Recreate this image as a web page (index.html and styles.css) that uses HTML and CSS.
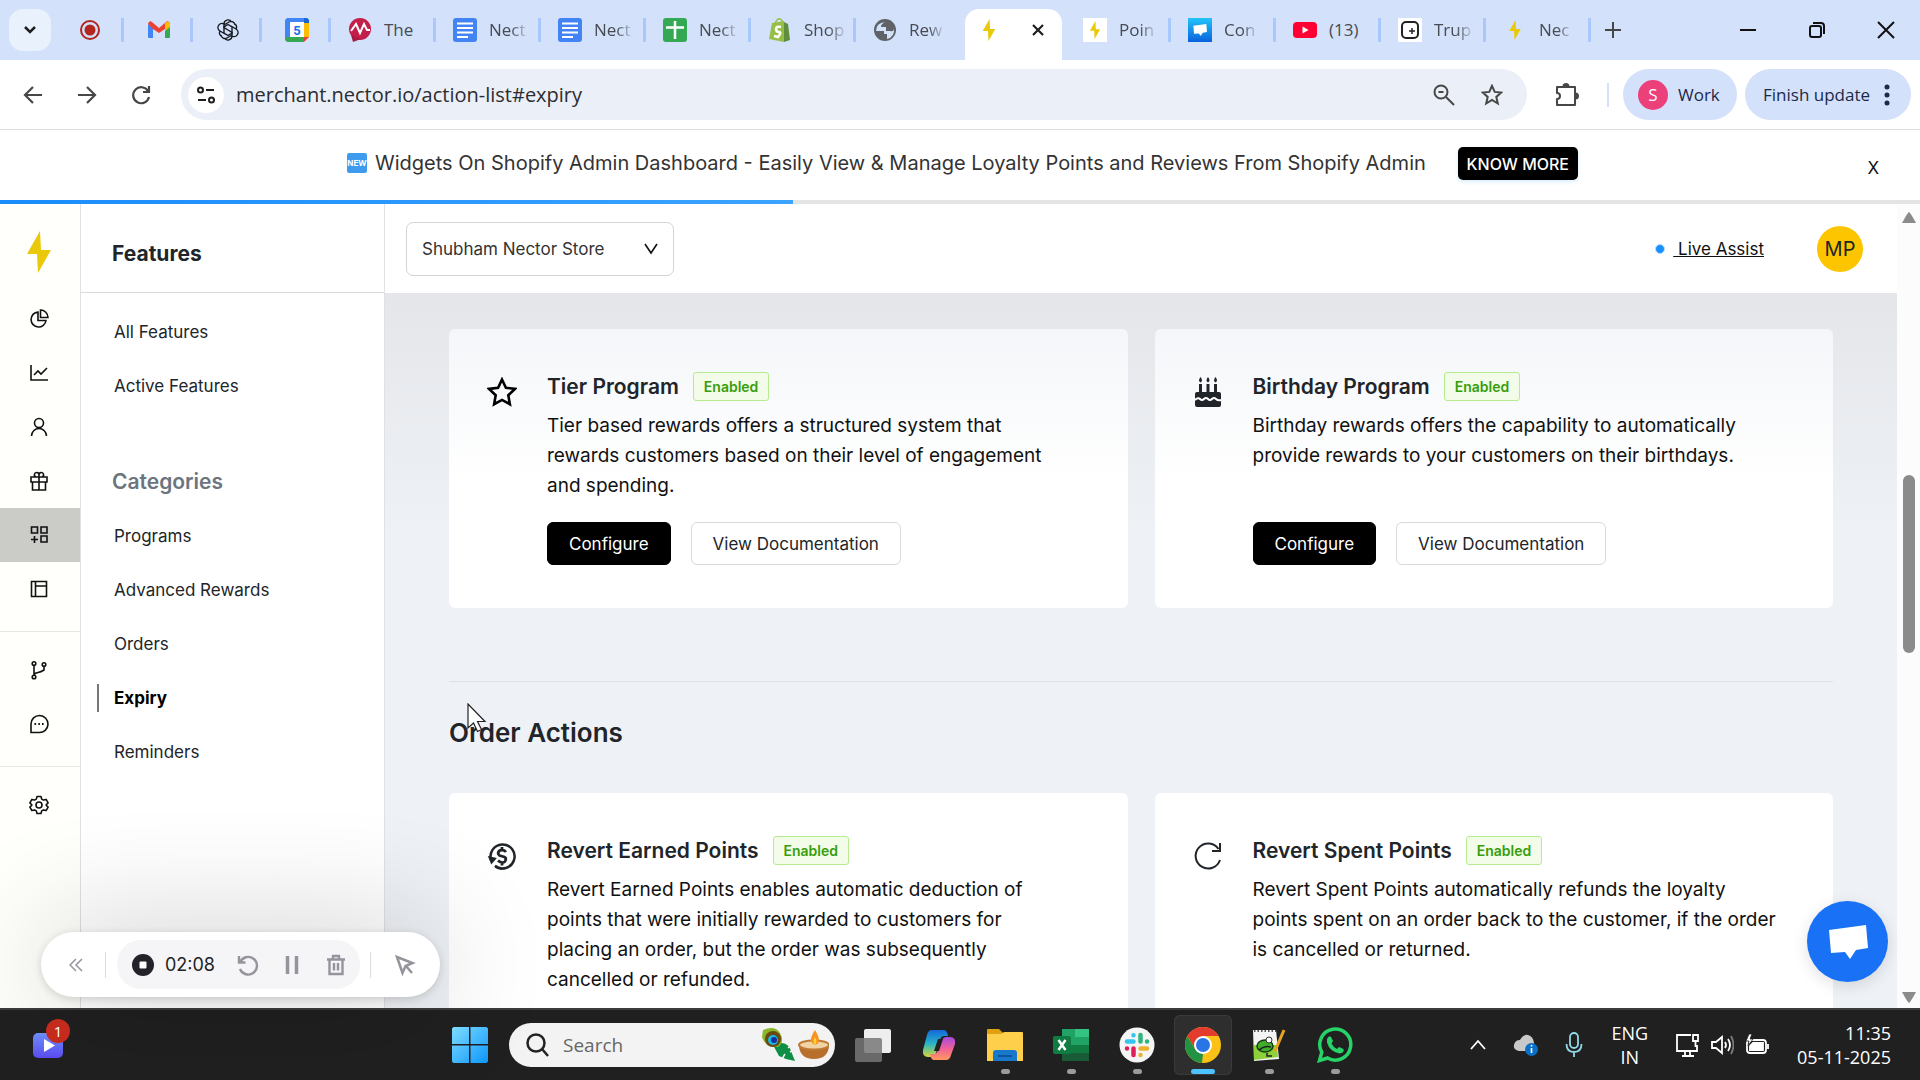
FILE: index.html
```html
<!DOCTYPE html>
<html lang="en">
<head>
<meta charset="utf-8">
<title>Nector</title>
<link rel="stylesheet" href="styles.css">
</head>
<body>
<svg class="defs" aria-hidden="true">
  <symbol id="bolt" viewBox="0 0 24 42"><path fill="#e9c90a" d="M13 0 0 23h10l1 19 13-23H14z"/></symbol>
  <symbol id="doc" viewBox="0 0 24 24"><rect width="24" height="24" rx="3" fill="#4284f4"/><path stroke="#fff" stroke-width="2" d="M4 5.500h16M4 10h16M4 14.500h16M4 19h11"/></symbol>
  <symbol id="chat" viewBox="0 0 40 34"><path fill="#fff" d="m1 5 37-5 2 23-12 2-6 9-5-7-14 1z"/></symbol>
  <linearGradient id="sky" x2="0" y2="1"><stop stop-color="#20c4fa"/><stop offset="1" stop-color="#0a62dc"/></linearGradient>
  <linearGradient id="win" x2="1" y2="1"><stop stop-color="#7fdcff"/><stop offset="1" stop-color="#0c96fa"/></linearGradient>
  <linearGradient id="violet" x2="0" y2="1"><stop stop-color="#6d8ef8"/><stop offset="1" stop-color="#5a4af0"/></linearGradient>
  <linearGradient id="copA" x2="0" y2="1"><stop stop-color="#1668d8"/><stop offset=".5" stop-color="#27b3c8"/><stop offset="1" stop-color="#d6d834"/></linearGradient>
  <linearGradient id="copB" x2="0" y2="1"><stop stop-color="#a64be0"/><stop offset=".5" stop-color="#f0609a"/><stop offset="1" stop-color="#ff9a5c"/></linearGradient>
</svg>

<header class="tabstrip">
  <button class="tab-search" aria-label="Search tabs"><svg width="14" height="10" viewBox="0 0 14 10"><path d="m2 2 5 5 5-5"/></svg></button>
  <div class="tabs" role="tablist">
    <button class="tab mini" role="tab" aria-label="Recorder"><svg width="22" height="22" viewBox="0 0 22 22"><circle cx="11" cy="11" r="9" fill="none" stroke="#b3261e" stroke-width="2"/><circle cx="11" cy="11" r="5.500" fill="#b3261e"/></svg></button>
    <button class="tab mini" role="tab" aria-label="Gmail"><svg width="22" height="18" viewBox="0 0 22 18"><path fill="#4285f4" d="M0 3v13q0 1 1 1h4V7z"/><path fill="#34a853" d="M22 3v13q0 1-1 1h-4V7z"/><path fill="#ea4335" d="M0 3q1-4 4-2l7 6 7-6q3-2 4 2l-5 5-6 4-6-4z"/><path fill="#fbbc04" d="M17 2q4-3 5 1v3l-5 4z"/></svg></button>
    <button class="tab mini" role="tab" aria-label="ChatGPT"><svg width="22" height="22" viewBox="0 0 22 22" fill="none" stroke="#16181d" stroke-width="1.400"><path d="M11 11 7 8.500V5a4 4 0 0 1 7.500-2M7 6l5-3a4 4 0 0 1 6 3"/><path d="M11 11l4 2.500V17a4 4 0 0 1-7.500 2M15 16l-5 3a4 4 0 0 1-6-3"/><path d="M7 5a4 4 0 0 0-4 7l5 3M3 12a4 4 0 0 0 1 5M15 17a4 4 0 0 0 4-7l-5-3M19 10a4 4 0 0 0-1-5M7 8v6l4 2.500 4-2.500V8l-4-2.500z"/></svg></button>
    <button class="tab mini" role="tab" aria-label="Calendar, 5"><svg width="24" height="24" viewBox="0 0 24 24"><path fill="#4285f4" d="M2 0h20l2 2v4H0V2z"/><path fill="#4285f4" d="M0 2h5v17H0z"/><path fill="#fbbc04" d="M19 5h5v14h-5z"/><path fill="#34a853" d="M0 19h19v5H2l-2-2z"/><path fill="#ea4335" d="M19 19h5l-5 5z"/><path fill="#1967d2" d="M19 0h3l2 2v3h-5z"/><path fill="#fff" d="M5 4h14v15H5z"/><text x="12" y="16.500" text-anchor="middle" class="cal">5</text></svg></button>
    <button class="tab" role="tab"><svg width="24" height="24" viewBox="0 0 24 24"><circle cx="12" cy="11" r="11" fill="#c41e4a"/><path fill="#a81c44" d="m3 17 2 7 8-3z"/><path fill="none" stroke="#fff" stroke-width="2" d="m3 13 5-7 4 9 4-9 3 6 3 0"/></svg><span class="whole">The</span></button>
    <button class="tab" role="tab"><svg width="24" height="24"><use href="#doc"/></svg><span>Nect</span></button>
    <button class="tab" role="tab"><svg width="24" height="24"><use href="#doc"/></svg><span>Nect</span></button>
    <button class="tab" role="tab"><svg width="24" height="24" viewBox="0 0 24 24"><rect width="24" height="24" rx="3" fill="#34a853"/><path stroke="#fff" stroke-width="2.500" d="M3 9.500h18M12 3v18"/></svg><span>Nect</span></button>
    <button class="tab" role="tab"><svg width="24" height="24" viewBox="0 0 24 24"><path fill="#95bf47" d="m4 5 12-2v21L1 21z"/><path fill="#5e8e3e" d="m16 4 4 2 2 16-6 2z"/><path fill="none" stroke="#95bf47" stroke-width="1.500" d="M7 6q2-6 5-5t2 4"/><path fill="none" stroke="#fff" stroke-width="2.500" d="M13 9q-5-1-5 2t3 3-1 5l-4-1"/></svg><span>Shop</span></button>
    <button class="tab" role="tab"><svg width="24" height="24" viewBox="0 0 24 24"><circle cx="12" cy="12" r="11" fill="#5f6368"/><path fill="#d3e1fb" d="M12 4q-4 2-4 5h5v4h4q4 1 4-3 1 9-7 11v-5h-3v-3H3q0-8 9-9z"/></svg><span>Rew</span></button>
    <button class="tab active" role="tab" aria-selected="true" aria-label="Nector"><svg width="24" height="22"><use href="#bolt"/></svg><svg class="tab-close" width="16" height="16" viewBox="0 0 16 16"><path d="m3 3 10 10M13 3 3 13"/></svg></button>
    <button class="tab" role="tab"><svg width="24" height="24" viewBox="0 0 24 24"><path fill="#fff" d="M0 0h24v24H0z"/><use href="#bolt" x="4" y="3" width="16" height="18"/></svg><span>Poin</span></button>
    <button class="tab" role="tab"><svg width="24" height="24" viewBox="0 0 24 24"><path fill="url(#sky)" d="M0 0h24v24H0z"/><use href="#chat" x="5" y="6" width="14" height="12"/></svg><span>Con</span></button>
    <button class="tab" role="tab"><svg width="24" height="24" viewBox="0 0 24 24"><rect y="4" width="24" height="16" rx="4" fill="#ff0033"/><path fill="#fff" d="m9.500 8.500 6 3.500-6 3.500z"/></svg><span class="whole">(13)</span></button>
    <button class="tab" role="tab"><svg width="24" height="24" viewBox="0 0 24 24"><path fill="#fff" d="M0 0h24v24H0z"/><rect x="4" y="4" width="16" height="16" rx="4" fill="none" stroke="#222" stroke-width="2"/><path stroke="#222" stroke-width="1.500" d="M14 10v6M11 13h6"/></svg><span>Trup</span></button>
    <button class="tab" role="tab"><svg width="24" height="20"><use href="#bolt"/></svg><span>Nec</span></button>
  </div>
  <button class="icon-btn new-tab" aria-label="New tab"><svg width="18" height="18" viewBox="0 0 18 18"><path d="M9 1v16M1 9h16"/></svg></button>
  <div class="window-controls">
    <button aria-label="Minimize"><svg width="18" height="18" viewBox="0 0 18 18"><path d="M1 9h16"/></svg></button>
    <button aria-label="Restore"><svg width="18" height="18" viewBox="0 0 18 18"><rect x="2" y="5" width="11" height="11" rx="2"/><path d="M5 2h8q3 0 3 3v8"/></svg></button>
    <button aria-label="Close window"><svg width="18" height="18" viewBox="0 0 18 18"><path d="m1 1 16 16M17 1 1 17"/></svg></button>
  </div>
</header>

<div class="toolbar">
  <button class="nav-btn" aria-label="Back"><svg width="20" height="20" viewBox="0 0 20 20"><path d="M19 10H2M10 2l-8 8 8 8"/></svg></button>
  <button class="nav-btn" aria-label="Forward"><svg width="20" height="20" viewBox="0 0 20 20"><path d="M1 10h17M10 2l8 8-8 8"/></svg></button>
  <button class="nav-btn" aria-label="Reload"><svg width="20" height="20" viewBox="0 0 20 20"><path d="M17 6a8 8 0 1 0 1 6M18 1v6h-6"/></svg></button>
  <div class="omnibox">
    <button class="site-info" aria-label="Site information"><svg width="20" height="20" viewBox="0 0 20 20"><circle cx="4.500" cy="5" r="2.500"/><path d="M10 5h8M2 15h8"/><circle cx="15.500" cy="15" r="2.500"/></svg></button>
    <input type="text" aria-label="Address" value="merchant.nector.io/action-list#expiry">
    <button class="icon-btn" aria-label="Zoom"><svg width="22" height="22" viewBox="0 0 22 22"><circle cx="8" cy="8" r="6.500"/><path d="M5.500 8h5M13 13l8 8"/></svg></button>
    <button class="icon-btn" aria-label="Bookmark"><svg width="22" height="22" viewBox="0 0 22 22"><path d="m11 1.800 2.700 6.100 6.600.6-5 4.400 1.500 6.600L11 16l-5.800 3.500 1.500-6.600-5-4.400 6.600-.6z"/></svg></button>
  </div>
  <button class="icon-btn ext" aria-label="Extensions"><svg width="26" height="26" viewBox="0 0 26 26"><path d="M3 5h18v18H3v-6q3 0 3-3t-3-3z" stroke-linejoin="round"/><path d="M9.500 4.500a2.500 2.500 0 0 1 5 0zM21.500 11.500a2.500 2.500 0 0 1 0 5z" fill="#474747"/></svg></button>
  <span class="bar-sep"></span>
  <button class="pill profile"><span class="dot-s">S</span>Work</button>
  <button class="pill update">Finish update<svg width="6" height="22" viewBox="0 0 6 22"><circle cx="3" cy="3" r="2.500"/><circle cx="3" cy="11" r="2.500"/><circle cx="3" cy="19" r="2.500"/></svg></button>
</div>

<section class="banner">
  <p><svg width="20" height="20" viewBox="0 0 20 20"><rect width="20" height="20" rx="2" fill="#3f9bee"/><text x="10" y="13" text-anchor="middle" class="new">NEW</text></svg>Widgets On Shopify Admin Dashboard - Easily View &amp; Manage Loyalty Points and Reviews From Shopify Admin</p>
  <button class="know">KNOW MORE</button>
  <button class="banner-close" aria-label="Dismiss">X</button>
</section>
<div class="progress"><span style="width:41.300%"></span></div>

<div class="app">
  <nav class="rail" aria-label="Sections">
    <a class="logo" href="#home" aria-label="Nector"><svg width="24" height="42"><use href="#bolt"/></svg></a>
    <a href="#overview" aria-label="Overview"><svg viewBox="0 0 20 20"><path d="M9 3a7.500 7.500 0 1 0 8 8.500H9z"/><path d="M11.500 1v7.500H19A7.500 7.500 0 0 0 11.500 1z"/></svg></a>
    <a href="#analytics" aria-label="Analytics"><svg viewBox="0 0 20 20"><path d="M2 2v15h17M5 12l4-4 3 3 6-6"/></svg></a>
    <a href="#customers" aria-label="Customers"><svg viewBox="0 0 20 20"><circle cx="10" cy="6" r="4.500"/><path d="M2.500 19a7.500 7.500 0 0 1 15 0"/></svg></a>
    <a href="#rewards" aria-label="Rewards"><svg viewBox="0 0 20 20"><path d="M2 6h16v5H2zM3.500 11v8h13v-8M10 6v13M10 6H7a2.300 2.300 0 1 1 3-2.300zM10 6h3a2.300 2.300 0 1 0-3-2.300z"/></svg></a>
    <a class="current" href="#features" aria-label="Features"><svg viewBox="0 0 20 20"><path d="M2.500 2h6v6h-6zM12 2h6v6h-6zM12 11h6v6h-6zM5.500 11v7M2 14.500h7"/></svg></a>
    <a href="#layout" aria-label="Layout"><svg class="thin" viewBox="0 0 20 20"><path d="M2.500 2.500h15v15h-15zM6.500 2.500v15M6.500 7h11"/></svg></a>
    <hr>
    <a href="#workflows" aria-label="Workflows"><svg viewBox="0 0 20 20"><circle cx="5" cy="3.500" r="1.800"/><circle cx="15" cy="4.500" r="1.800"/><circle cx="5" cy="17" r="1.800"/><path d="M5 5.500V15M15 6.500V10q-3 2-6 2.500t-4 2"/></svg></a>
    <a href="#messages" aria-label="Messages"><svg viewBox="0 0 20 20"><path d="M2 18.500V10a8.500 8.500 0 1 1 8 8.500z"/><path d="M5.500 10h1.600M9.300 10h1.600M13 10h1.600" stroke-width="2"/></svg></a>
    <hr>
    <a href="#settings" aria-label="Settings"><svg viewBox="0 0 20 20"><path stroke-linejoin="round" d="M8 1.500h4l.7 2.600 1.800 1 2.600-.7 2 3.500-1.900 1.900v.4l1.900 1.900-2 3.500-2.600-.7-1.800 1-.7 2.600H8l-.7-2.600-1.800-1-2.600.7-2-3.500 1.900-1.900v-.4L.9 7.900l2-3.500 2.600.7 1.800-1z"/><circle cx="10" cy="10" r="3"/></svg></a>
  </nav>

  <aside class="sidebar">
    <h2 class="side-head">Features</h2>
    <nav aria-label="Features">
      <a href="#all">All Features</a>
      <a href="#active">Active Features</a>
      <h3>Categories</h3>
      <a href="#programs">Programs</a>
      <a href="#advanced">Advanced Rewards</a>
      <a href="#orders">Orders</a>
      <a class="current" href="#expiry">Expiry</a>
      <a href="#reminders">Reminders</a>
    </nav>
  </aside>

  <main>
    <header class="main-head">
      <label class="store"><select aria-label="Store"><option>Shubham Nector Store</option></select><svg width="14" height="12" viewBox="0 0 14 12"><path d="m1 1 6 9 6-9"/></svg></label>
      <a class="assist" href="#assist"><i></i><span>&nbsp;Live Assist</span></a>
      <button class="avatar">MP</button>
    </header>
    <div class="content">
      <div class="cards shaded">
        <article class="card">
          <svg class="card-icon" viewBox="0 0 30 30"><path d="m15 2.500 3.900 8.200 9 1.200-6.600 6.300 1.600 9L15 22.900l-7.900 4.300 1.600-9-6.600-6.300 9-1.200z" fill="none" stroke="#000" stroke-width="2.600"/></svg>
          <div class="card-body">
            <h3>Tier Program <span class="badge">Enabled</span></h3>
            <p>Tier based rewards offers a structured system that rewards customers based on their level of engagement and spending.</p>
            <div class="actions"><button class="primary">Configure</button><button>View Documentation</button></div>
          </div>
        </article>
        <article class="card">
          <svg class="card-icon" viewBox="0 0 30 30" fill="#212529"><path d="M6 7h3v9H6zM13.500 7h3v9h-3zM21 7h3v9h-3zM7.500 0q3 4 0 5.500-3-1.500 0-5.500zM15 0q3 4 0 5.500-3-1.500 0-5.500zM22.500 0q3 4 0 5.500-3-1.500 0-5.500z"/><path d="M4 15h22q2 0 2 2v11q0 2-2 2H4q-2 0-2-2V17q0-2 2-2z"/><path d="M2 23q3-3 5-1t4 0 4 0 4 0 4 0 5 1" fill="none" stroke="#fff" stroke-width="2"/></svg>
          <div class="card-body">
            <h3>Birthday Program <span class="badge">Enabled</span></h3>
            <p>Birthday rewards offers the capability to automatically provide rewards to your customers on their birthdays.</p>
            <div class="actions"><button class="primary">Configure</button><button>View Documentation</button></div>
          </div>
        </article>
      </div>
      <hr>
      <h2>Order Actions</h2>
      <div class="cards">
        <article class="card">
          <svg class="card-icon" viewBox="0 0 30 30" fill="none" stroke="#212529" stroke-width="2.500"><path d="M4.500 20A12 12 0 1 1 8 24.700"/><path d="m2 16 2.500 6 4-4.500zM8 26q4 3 8 1.500" fill="#212529" stroke-width="1.500"/><path d="M19 11q-1.500-2-4-2t-3.500 2 1 3.500l5 1.500q2 1 1 3.500t-3.500 2-4-2M15 6v3M15 21.500v3" stroke-width="2.800"/></svg>
          <div class="card-body">
            <h3>Revert Earned Points <span class="badge">Enabled</span></h3>
            <p>Revert Earned Points enables automatic deduction of points that were initially rewarded to customers for placing&nbsp;an order, but the order was subsequently cancelled or refunded.</p>
          </div>
        </article>
        <article class="card">
          <svg class="card-icon" viewBox="0 0 30 30" fill="none" stroke="#212529" stroke-width="2"><path d="M27 19A12.500 12.500 0 1 1 25.500 8"/><path d="M27 2v8h-8"/></svg>
          <div class="card-body">
            <h3>Revert Spent Points <span class="badge">Enabled</span></h3>
            <p>Revert Spent Points automatically refunds the loyalty points spent on an order back to the customer, if the order is cancelled or returned.</p>
          </div>
        </article>
      </div>
    </div>
  </main>

  <div class="scrollbar" aria-hidden="true">
    <svg width="16" height="12" viewBox="0 0 16 12"><path d="M8 1q1 0 7 11H1Q7 1 8 1z"/></svg>
    <span class="track"><span class="thumb"></span></span>
    <svg width="16" height="12" viewBox="0 0 16 12"><path d="M8 11Q7 11 1 0h14Q9 11 8 11z"/></svg>
  </div>

  <button class="chat" aria-label="Open chat"><svg width="40" height="34"><use href="#chat"/></svg></button>

  <svg class="pointer" width="20" height="30" viewBox="0 0 20 30"><path d="M1 1v24l5.500-5 4 8.500 4-2-4-8H18z" fill="#fff" stroke="#222" stroke-width="1.200"/></svg>

  <div class="recorder">
    <button aria-label="Collapse"><svg width="14" height="14" viewBox="0 0 14 14"><path d="M7 1 1 7l6 6M13 1 7 7l6 6" stroke-width="1.500"/></svg></button>
    <span class="rec-sep"></span>
    <div class="rec-group">
      <button aria-label="Stop"><svg width="22" height="22" viewBox="0 0 22 22"><circle cx="11" cy="11" r="11" fill="#222228" stroke="none"/><rect x="7.500" y="7.500" width="7" height="7" rx="1" fill="#fff" stroke="none"/></svg></button>
      <time>02:08</time>
      <button aria-label="Restart"><svg width="22" height="22" viewBox="0 0 22 22"><path d="M3 8.500A8.800 8.800 0 1 1 3 15M2 2v6.500h6.500"/></svg></button>
      <button aria-label="Pause"><svg width="22" height="22" viewBox="0 0 22 22"><path d="M6.500 2v18M15.500 2v18" stroke-width="3.500"/></svg></button>
      <button aria-label="Delete"><svg width="22" height="22" viewBox="0 0 22 22"><path d="M2 5.500h18M8 5V2h6v3M4.500 6v14h13V6M9 9v7.500M13 9v7.500"/></svg></button>
    </div>
    <span class="rec-sep"></span>
    <button aria-label="Pointer"><svg width="22" height="22" viewBox="0 0 22 22"><path d="m3 3 5.500 16 3-7 7-3zM12 12l6 7" stroke-width="2.500"/></svg></button>
  </div>
</div>

<footer class="taskbar">
  <button class="widget" aria-label="Widgets"><svg width="30" height="25" viewBox="0 0 30 25"><rect width="30" height="25" rx="5" fill="url(#violet)"/><path fill="#fff" d="m11 6 11 6.500L11 19z"/></svg><span>1</span></button>
  <div class="apps">
    <button aria-label="Start"><svg width="36" height="36" viewBox="0 0 36 36" fill="url(#win)"><path d="M1.500 0H17v17H0V1.500zM18.500 0H34.500L36 1.500V17H18.500zM0 18.500h17V36H1.500L0 34.500zM18.500 18.500H36v16L34.500 36h-16z"/></svg></button>
    <label class="search">
      <svg width="24" height="24" viewBox="0 0 24 24"><circle cx="11" cy="10" r="8.500"/><path d="m17 16 6 7"/></svg>
      <input type="search" placeholder="Search">
      <svg width="68" height="36" viewBox="0 0 68 36"><path fill="#0d8f45" d="M12 18q14-6 18 6l4 10-9-2-7-3z"/><path fill="#8ab62b" d="M2 3q12-5 17 3 5 9-2 14Q4 21 1 10z"/><ellipse cx="12" cy="12" rx="8" ry="8" fill="#6b4a12"/><circle cx="12" cy="13" r="5" fill="#19b6e6"/><circle cx="13" cy="13" r="3" fill="#1a2f9c"/><path stroke="#f0f0f0" stroke-width="1.500" d="m21 32 3-5M34 22l-5 3M32 17l-5 4"/><path fill="#b96f2c" d="M38 17h30q0 15-15 15T38 17z"/><ellipse cx="53" cy="18" rx="15" ry="4.500" fill="#f1d4a6" stroke="#c07a34" stroke-width="2"/><path fill="#f7931e" d="M54 3q8 13 0 15-8-3 0-15z"/><path fill="#ffd23e" d="M54 10q3 6 0 8-3-2 0-8z"/></svg>
    </label>
    <button aria-label="Task view"><svg width="36" height="36" viewBox="0 0 36 36"><rect x="9" y="2" width="27" height="24" rx="2" fill="#eee"/><rect y="11" width="27" height="24" rx="2" fill="#777" opacity=".85"/></svg></button>
    <button aria-label="Copilot"><svg width="36" height="36" viewBox="0 0 36 36"><path fill="url(#copA)" d="M11 3h12q3 0 4 6h-4q-3 0-4 4l-4 13q-1 4-5 4H7q-6 0-5-7L6 8q1-5 5-5z"/><path fill="url(#copB)" d="M25 33H13q-3 0-4-6h4q3 0 4-4l4-10q1-3 5-3h3q6 0 5 7l-4 11q-1 5-5 5z"/><path fill="#202020" d="M17 12h5l-4 12h-5z"/></svg></button>
    <button class="open" aria-label="File Explorer"><svg width="36" height="36" viewBox="0 0 36 36"><path fill="#e0a010" d="M0 3q0-1 1-1h11l4 4v5H0z"/><path fill="#fdcf4b" d="M0 7h14l3-2h18q1 0 1 1v28H0z"/><path fill="#1778cc" d="M6 34V26q0-3 3-3h18q3 0 3 3v8z"/><path stroke="#0a4a8a" stroke-width="1.500" d="M11 29h14"/></svg></button>
    <button class="open" aria-label="Excel"><svg width="36" height="36" viewBox="0 0 36 36"><path fill="#21a366" d="M9 2h27v32H9z"/><path fill="#33c481" d="M22 2h14v8H22z"/><path fill="#107c41" d="M9 18h27v8H9z"/><path fill="#185c37" d="M9 26h27v8H9z"/><rect y="9" width="18" height="18" rx="2" fill="#107c41"/><path stroke="#fff" stroke-width="2.500" d="m5.500 13 7 10M12.500 13l-7 10"/></svg></button>
    <button class="open" aria-label="Slack"><svg width="36" height="36" viewBox="0 0 36 36" stroke-width="4.500" stroke-linecap="round"><circle cx="18" cy="18" r="17.500" fill="#f5f5f5"/><path stroke="#36c5f0" d="M8 14.500h6.500M14.500 8.300v0"/><path stroke="#2eb67d" d="M21.500 8v6.500M28 14.500v0"/><path stroke="#ecb22e" d="M21.500 21.500H28M21.500 28v0"/><path stroke="#e01e5a" d="M14.500 21.500V28M8 21.500v0"/></svg></button>
    <button class="open focus" aria-label="Chrome"><svg width="36" height="36" viewBox="0 0 36 36"><circle cx="18" cy="18" r="18" fill="#fbc116"/><path fill="#e33b2e" d="M2.400 9A18 18 0 0 1 33.600 9H18L10.200 22.500z"/><path fill="#229342" d="M2.400 9 10.200 22.500 18 27l-1 9A18 18 0 0 1 2.400 9z"/><circle cx="18" cy="18" r="9" fill="#fff"/><circle cx="18" cy="18" r="7" fill="#2a75e6"/></svg></button>
    <button class="open" aria-label="Notepad++"><svg width="36" height="36" viewBox="0 0 36 36"><path fill="#f4f4f4" d="M2 3h23l3 29-25 2z"/><path fill="#8ed03a" d="M3 18h23l1 12-24 3z"/><path stroke="#555" stroke-width="2" stroke-dasharray="1.500 2" d="M3 4h22"/><ellipse cx="14" cy="19" rx="8" ry="6" fill="#3fae2a" stroke="#153d12" stroke-width="1.500"/><circle cx="18" cy="13" r="3" fill="#fff" stroke="#333"/><path stroke="#222" stroke-width="1.500" fill="none" d="M8 23q6-5 12-3M16 26v3h5"/><path stroke="#e9a321" stroke-width="3" d="m24 24 9-21"/></svg></button>
    <button class="open" aria-label="WhatsApp"><svg width="36" height="36" viewBox="0 0 36 36"><path fill="none" stroke="#25d366" stroke-width="3.500" d="m2.500 33.500 2.300-8.300a15.500 15.500 0 1 1 5.800 5.800z"/><path fill="#25d366" d="M10 12q2-4 4-2l2 4-1.500 2.500q2 4 5.500 5.500l2-2 4.500 2q1 4-4 4.500-10-2-12.500-11z"/></svg></button>
  </div>
  <div class="tray">
    <button aria-label="Hidden icons"><svg width="18" height="12" viewBox="0 0 18 12"><path d="m2 10 7-8 7 8"/></svg></button>
    <button aria-label="OneDrive"><svg width="26" height="24" viewBox="0 0 26 24"><path fill="#c9c9c9" stroke="none" d="M6 18q-6-1-5-6t6-5q3-6 8-5t6 8l-2 8z"/><circle cx="18.500" cy="16.500" r="6.500" fill="#0a6fc9" stroke="none"/><path d="M18.500 15v5M18.500 12v1.500" stroke-width="1.600"/></svg></button>
    <button aria-label="Microphone"><svg width="18" height="26" viewBox="0 0 18 26" class="mic"><rect x="5" y="1" width="8" height="15" rx="4"/><path d="M1.500 12q0 8 7.500 8t7.500-8M9 20v5"/></svg></button>
    <button class="lang">ENG<br>IN</button>
    <button aria-label="Network"><svg width="26" height="26" viewBox="0 0 26 26"><path d="M17 3H3v16h20v-6M8 24h12M11 19v5M16 19v5M19 3h5v6h-5zM21.500 9v6"/></svg></button>
    <button aria-label="Volume"><svg width="24" height="22" viewBox="0 0 24 22"><path d="M2 8v6h4l6 5V3L6 8zM15 8q2 3 0 6M18 5q4 6 0 12"/><path opacity=".4" d="M21 2q5 9 0 18"/></svg></button>
    <button aria-label="Battery"><svg width="26" height="22" viewBox="0 0 26 22"><rect x="3" y="6" width="19" height="13" rx="3"/><path fill="#fff" d="M9 9h10v7H6v-4zM24 10v5"/><path fill="#fff" d="M5 0 2 7h3l-1 5 5-7H6l2-5z" stroke="#202020" stroke-width=".8"/></svg></button>
    <button class="clock">11:35<br>05-11-2025</button>
  </div>
</footer>
</body>
</html>
```
FILE: styles.css
```css
* { box-sizing: border-box; }

body {
  margin: 0;
  height: 100vh;
  display: flex;
  flex-direction: column;
  overflow: hidden;
  background: #fff;
  color: #212529;
  font: 17px/24px Inter, "Noto Sans", sans-serif;
}

h2, h3, p { margin: 0; }
a { color: inherit; text-decoration: none; }
button { padding: 0; border: 0; background: none; color: inherit; font: inherit; }
svg { flex: none; }
.defs { position: absolute; width: 0; height: 0; }

.tabstrip, .toolbar, .taskbar { font-family: "Open Sans", "Noto Sans", sans-serif; }

/* Tab strip */
.tabstrip {
  flex: none;
  display: flex;
  align-items: center;
  height: 60px;
  padding-left: 9px;
  background: #d3e1fb;
}
.tab-search {
  display: grid;
  place-items: center;
  width: 42px;
  height: 42px;
  margin-right: 4px;
  border-radius: 14px;
  background: #e9f1fd;
}
.tab-search path { fill: none; stroke: #1f1f1f; stroke-width: 2.5; }
.tabs { display: flex; align-self: stretch; align-items: center; }
.tab {
  display: flex;
  align-items: center;
  gap: 12px;
  width: 105px;
  height: 24px;
  padding-left: 17px;
  border-right: 3px solid #a8c7fa;
  color: #474b52;
  font-size: 17px;
}
.tab.mini { width: 69px; padding-left: 3px; justify-content: center; }
.tab span {
  text-align: left;
  white-space: nowrap;
  mask-image: linear-gradient(90deg, #000 60%, rgba(0, 0, 0, .2));
}
.tab .whole { mask-image: none; }
.tab:has(+ .active) { border-color: transparent; }
.tab.active {
  align-self: flex-end;
  width: 97px;
  height: 51px;
  margin: 0 4px;
  padding: 0 16px 9px 12px;
  justify-content: space-between;
  border: 0;
  border-radius: 14px 14px 0 0;
  background: #fff;
}
.tab-close path { stroke: #1f1f1f; stroke-width: 2.2; }
.cal { font: 700 13px Roboto, sans-serif; fill: #1a73e8; }
.icon-btn { display: grid; place-items: center; }
.icon-btn svg { fill: none; stroke: #474747; stroke-width: 2; }
.new-tab { width: 44px; height: 44px; }
.window-controls { display: flex; align-self: stretch; margin-left: auto; }
.window-controls button { display: grid; place-items: center; width: 69px; }
.window-controls svg { fill: none; stroke: #111; stroke-width: 2; }

/* Address bar */
.toolbar {
  flex: none;
  display: flex;
  align-items: center;
  height: 70px;
  padding: 0 9px 0 6px;
  border-bottom: 1px solid #d9dce1;
  background: #fff;
}
.nav-btn { display: grid; place-items: center; width: 54px; height: 48px; }
.nav-btn svg { fill: none; stroke: #474747; stroke-width: 2.2; }
.omnibox {
  flex: 1;
  display: flex;
  align-items: center;
  gap: 26px;
  height: 51px;
  margin-left: 13px;
  padding: 0 24px 0 7px;
  border-radius: 26px;
  background: #ebeff8;
}
.site-info {
  display: grid;
  place-items: center;
  width: 36px;
  height: 36px;
  margin-right: -14px;
  border-radius: 50%;
  background: #fff;
}
.site-info svg { fill: none; stroke: #1f1f1f; stroke-width: 2; }
.omnibox input {
  flex: 1;
  min-width: 0;
  padding: 0;
  border: 0;
  outline: 0;
  background: none;
  color: #2b2d31;
  font: inherit;
  font-size: 20px;
}
.ext { width: 80px; }
.bar-sep { width: 2px; height: 24px; margin-right: 14px; background: #d3e1fb; }
.pill {
  display: flex;
  align-items: center;
  height: 51px;
  border-radius: 26px;
  background: #d3e1fb;
  color: #1b2a4a;
  font-size: 17px;
}
.profile { gap: 10px; width: 114px; padding-left: 15px; margin-right: 8px; }
.dot-s {
  width: 30px;
  border-radius: 50%;
  background: #ec407a;
  color: #fff;
  font-size: 17px;
  line-height: 30px;
}
.update { justify-content: space-between; width: 166px; padding: 0 21px 0 18px; white-space: nowrap; }
.update svg { fill: #1b2a4a; }

/* Announcement */
.banner {
  flex: none;
  display: flex;
  align-items: center;
  height: 70px;
  padding-left: 347px;
}
.banner p {
  display: flex;
  align-items: center;
  gap: 8px;
  margin-bottom: 4px;
  color: #333;
  font-size: 20px;
  white-space: nowrap;
}
.new { font: 700 8px Inter, sans-serif; fill: #fff; }
.know {
  width: 120px;
  height: 33px;
  margin-left: 32px;
  margin-bottom: 3px;
  border-radius: 5px;
  background: #000;
  box-shadow: 0 2px 4px #d8effc;
  color: #fff;
  font-size: 16px;
  font-weight: 500;
}
.banner-close { margin: 5px 41px 0 auto; color: #111; }
.progress { flex: none; height: 4px; background: #e4e4e4; }
.progress span { display: block; height: 100%; background: linear-gradient(90deg, #1a8cfb, #3ba3ff); }

/* Application */
.app { position: relative; flex: 1; min-height: 0; display: flex; }
.rail {
  flex: none;
  width: 81px;
  border-right: 1px solid #dfe1e4;
  background: #fffffb;
}
.rail a { display: grid; place-items: center; height: 54px; padding-right: 2px; }
.rail .logo { height: 88px; align-content: center; padding-top: 8px; }
.rail a:not(.logo) svg { width: 20px; height: 20px; fill: none; stroke: #111; stroke-width: 1.6; }
.rail a .thin { stroke-width: 1.2; }
.rail .current { background: #cbcbc8; }
.rail hr { margin: 15px 0 11px; border: 0; border-top: 1px solid #e6e6e6; }

.sidebar { flex: none; width: 304px; border-right: 1px solid #dfe1e4; background: #fff; }
.side-head {
  height: 89px;
  padding: 5px 0 0 31px;
  border-bottom: 1px solid #d9dbde;
  font-size: 21px;
  font-weight: 700;
  line-height: 89px;
}
.sidebar nav { padding-top: 12px; }
.sidebar nav a { display: flex; align-items: center; height: 54px; padding-left: 33px; }
.sidebar h3 {
  margin-top: 42px;
  padding-left: 31px;
  color: #6c757d;
  font-size: 21px;
  font-weight: 600;
  line-height: 54px;
}
.sidebar nav .current { color: #000; font-weight: 700; }
.sidebar .current::before {
  content: "";
  width: 2px;
  height: 28px;
  margin: 0 15px 0 -17px;
  background: #777;
}

main { flex: 1; min-width: 0; display: flex; flex-direction: column; }
.main-head {
  flex: none;
  display: flex;
  align-items: center;
  height: 89px;
  padding: 0 34px 0 21px;
}
.store { position: relative; }
.store select {
  width: 268px;
  height: 54px;
  padding: 0 15px;
  appearance: none;
  border: 1px solid #d2d4d8;
  border-radius: 7px;
  background: #fff;
  color: #333;
  font: inherit;
}
.store svg { position: absolute; right: 16px; top: 21px; fill: none; stroke: #111; stroke-width: 1.6; }
.assist { display: flex; align-items: center; gap: 8px; margin-left: auto; color: #111; }
.assist i { width: 10px; height: 10px; border: 1px solid #b6dbff; border-radius: 50%; background: #1890ff; }
.assist span { text-decoration: underline; }
.avatar {
  width: 46px;
  height: 46px;
  margin-left: 53px;
  border-radius: 50%;
  background: #fdc500;
  font-size: 20px;
}

.content {
  flex: 1;
  min-height: 0;
  overflow: hidden;
  padding: 36px 64px 0;
  background: linear-gradient(#e4e6ea, #eef1f5 240px);
}
.cards { display: grid; grid-template-columns: 1fr 1fr; gap: 27px; }
.card { display: flex; min-height: 279px; padding: 43px 38px; border-radius: 6px; background: #fff; }
.shaded .card { background: linear-gradient(#f4f6f9, #fff 150px); }
.card-icon { width: 30px; height: 30px; margin: 5px 30px 0 0; }
.card-body { flex: 1; display: flex; flex-direction: column; }
.card h3 {
  display: flex;
  align-items: center;
  gap: 14px;
  margin-bottom: 10px;
  font-size: 21px;
  font-weight: 600;
}
.badge {
  padding: 0 10px;
  border: 1px solid #b7eb8f;
  border-radius: 3px;
  background: #f2fce8;
  color: #389e0d;
  font-size: 14px;
  font-weight: 600;
  line-height: 27px;
}
.card p { max-width: 527px; color: #111; font-size: 19px; line-height: 30px; }
.actions { display: flex; gap: 20px; margin-top: auto; padding-top: 21px; }
.actions button {
  height: 43px;
  padding: 0 21px;
  border: 1px solid #d9d9d9;
  border-radius: 6px;
  background: #fff;
}
.actions .primary { border-color: #000; background: #000; color: #fff; }
.content hr { margin: 73px 0 0; border: 0; border-top: 1px solid #dfe2e6; }
.content h2 { margin: 34px 0 44px; font-size: 26px; font-weight: 600; line-height: 33px; }

.scrollbar {
  flex: none;
  display: flex;
  flex-direction: column;
  align-items: center;
  width: 23px;
  padding: 7px 0 4px;
  background: #fcfcfc;
}
.scrollbar svg { fill: #8b8b8b; }
.track { flex: 1; padding-top: 252px; }
.thumb { display: block; width: 12px; height: 178px; border-radius: 6px; background: #8b8b8b; }

.chat {
  position: absolute;
  right: 32px;
  bottom: 26px;
  display: grid;
  place-items: center;
  width: 81px;
  height: 81px;
  border-radius: 50%;
  background: #1972f5;
  box-shadow: 0 4px 16px rgba(0, 0, 0, .12);
}
.pointer { position: absolute; left: 467px; top: 499px; }

.recorder {
  position: absolute;
  left: 41px;
  bottom: 11px;
  display: flex;
  align-items: center;
  justify-content: space-between;
  width: 399px;
  height: 65px;
  padding: 0 24px 0 28px;
  border-radius: 33px;
  background: #fff;
  box-shadow: 0 2px 8px rgba(0, 0, 0, .15), 0 0 120px rgba(0, 0, 0, .24);
}
.recorder button { display: grid; place-items: center; }
.recorder svg { fill: none; stroke: #94949c; stroke-width: 2.4; }
.rec-sep { width: 1px; height: 26px; background: #dedee2; }
.rec-group {
  display: flex;
  align-items: center;
  gap: 22px;
  height: 49px;
  margin: 0 -12px;
  padding: 0 13px 0 15px;
  border-radius: 24px;
  background: #f5f5f8;
}
.rec-group time { margin-left: -11px; color: #222; font-size: 18px; }

/* Taskbar */
.taskbar {
  flex: none;
  display: flex;
  align-items: center;
  height: 72px;
  padding: 0 29px 0 33px;
  border-top: 2px solid #3c3c3c;
  background: #202020;
  color: #fff;
}
.widget { position: relative; display: grid; }
.widget span {
  position: absolute;
  left: 13px;
  top: -14px;
  width: 24px;
  border-radius: 50%;
  background: #c42b1c;
  font-size: 15px;
  line-height: 24px;
}
.apps { display: flex; align-items: center; margin: 0 auto 0 389px; }
.apps button { position: relative; display: grid; place-items: center; width: 66px; height: 60px; }
.apps > button:first-child { width: 36px; margin-right: 21px; }
.search {
  display: flex;
  align-items: center;
  gap: 14px;
  width: 326px;
  height: 44px;
  margin-right: 5px;
  padding: 0 6px 0 16px;
  border-radius: 22px;
  background: #f3f3f3;
}
.search svg:first-child { fill: none; stroke: #222; stroke-width: 2.5; }
.search input {
  flex: 1;
  min-width: 0;
  padding: 0;
  border: 0;
  outline: 0;
  background: none;
  font: inherit;
  font-size: 19px;
}
.search input::placeholder { color: #666; opacity: 1; }
.apps .open::after {
  content: "";
  position: absolute;
  bottom: 1px;
  width: 9px;
  height: 5px;
  border-radius: 3px;
  background: #9b9b9b;
}
.apps .focus {
  width: 58px;
  margin: 0 4px;
  border-radius: 6px;
  background: #2e2e2e;
  box-shadow: inset 0 0 0 1px #3a3a3a;
}
.apps .focus::after { width: 24px; background: #4cc2ff; }
.tray { display: flex; align-items: center; gap: 10px; font-size: 18px; line-height: 24px; }
.tray button { display: grid; place-items: center; }
.tray svg { fill: none; stroke: #fff; stroke-width: 1.8; }
.tray .mic { stroke: #8fd8e8; }
.tray > button:nth-child(-n+3) { margin-right: 16px; }
.tray .lang { display: block; margin: 0 16px 0 2px; }
.tray .clock { display: block; margin-left: 17px; text-align: right; }
```
